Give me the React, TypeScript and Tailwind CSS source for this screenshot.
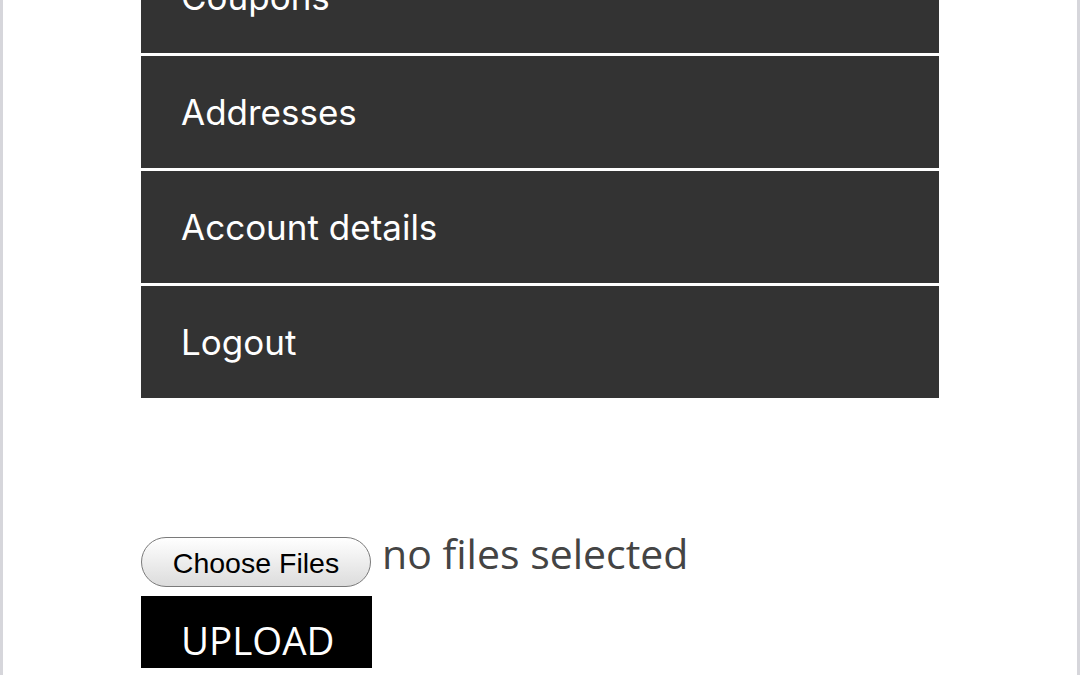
const items = ["Coupons", "Addresses", "Account details", "Logout"];

export default function App() {
  return (
    <div className="h-[675px] w-[1080px] overflow-hidden border-x-[3px] border-[#d6d6db] bg-white">
      <div className="-mt-[59px] ml-[138px] w-[798px]">
        <ul className="flex flex-col gap-[3px]">
          {items.map((item) => (
            <li
              key={item}
              className="flex h-[112px] items-center bg-[#333333] pl-10 text-[35px] text-white"
              style={{ fontFamily: "Inter, 'Noto Sans', sans-serif" }}
            >
              {item}
            </li>
          ))}
        </ul>

        <div className="mt-[139px] flex items-start gap-[11px]">
          <button
            className="h-[50px] w-[230px] shrink-0 rounded-full border border-[#7a7a7a] bg-gradient-to-b from-white to-[#dcdcdc] text-[28.5px] leading-none text-black"
            style={{ fontFamily: "'Liberation Sans', Arial, sans-serif" }}
          >
            <span className="relative top-[1px]">Choose Files</span>
          </button>
          <span
            className="-mt-[14px] whitespace-nowrap text-[41px] text-[#444444]"
            style={{ fontFamily: "'Open Sans', sans-serif" }}
          >
            no files selected
          </span>
        </div>

        <div
          className="mt-[9px] flex h-[72px] w-[231px] items-end bg-black pb-[9px] pl-10 text-[38.5px] leading-none text-white"
          style={{ fontFamily: "'Open Sans', sans-serif" }}
        >
          UPLOAD
        </div>
      </div>
    </div>
  );
}
